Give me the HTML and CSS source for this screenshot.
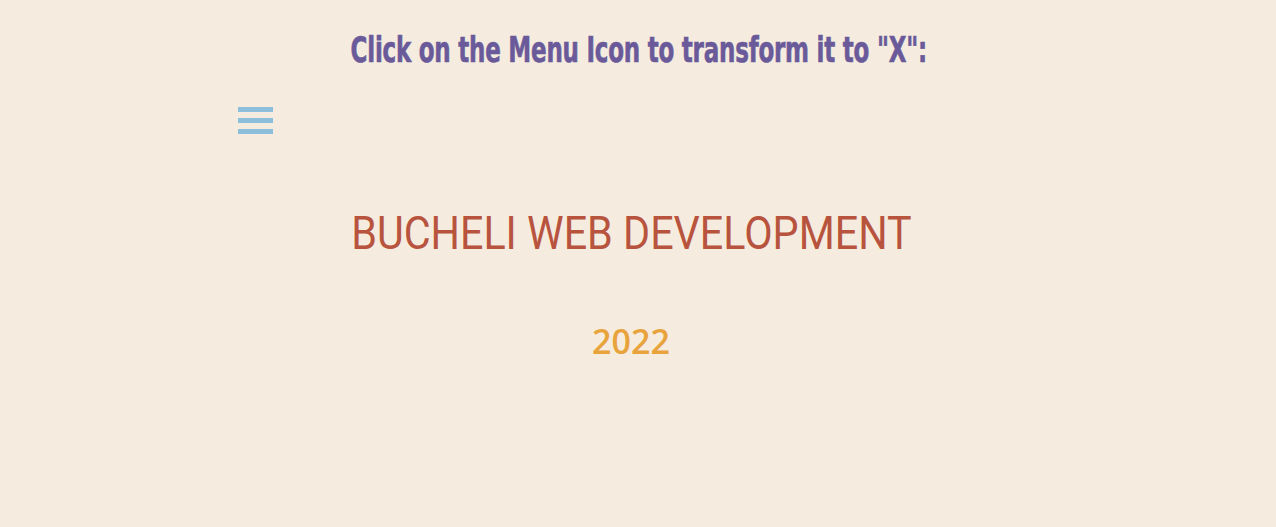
FILE: index.html
```html
<!DOCTYPE html>
<html>
<head>
<meta charset="utf-8">
<link rel="stylesheet" href="styles.css">
</head>
<body>
<div class="intro-row">
  <h2 class="intro">Click on the Menu Icon to transform it to "X":</h2>
</div>
<div class="menu-row">
  <div class="menu-icon">
    <div class="bar"></div>
    <div class="bar"></div>
    <div class="bar"></div>
  </div>
</div>
<div class="title-row">
  <h1 class="title">BUCHELI WEB DEVELOPMENT</h1>
</div>
<p class="year">2022</p>
</body>
</html>
```
FILE: styles.css
```css
html, body {
  margin: 0;
  padding: 0;
  background: #f5ecdf;
}
body {
  width: 1276px;
  height: 527px;
  overflow: hidden;
}
.intro-row {
  padding-top: 30px;
  display: flex;
  justify-content: center;
  padding-left: 1px;
}
.intro {
  margin: 0;
  font-family: "DejaVu Sans Condensed", "Liberation Sans", sans-serif;
  font-weight: 700;
  font-size: 35px;
  line-height: 40px;
  color: #6a5a9a;
  letter-spacing: -0.3px;
  white-space: nowrap;
  transform: scaleX(0.73);
  -webkit-text-stroke: 0.6px #6a5a9a;
}
.menu-row {
  padding: 37px 0 0 238px;
}
.menu-icon {
  display: flex;
  flex-direction: column;
  gap: 6px;
  width: 35px;
}
.bar {
  height: 5px;
  background: #8bbfdb;
}
.title-row {
  display: flex;
  justify-content: center;
  padding-right: 14px;
  margin-top: 72px;
}
.title {
  margin: 0;
  font-family: Roboto, sans-serif;
  font-weight: 400;
  font-size: 46px;
  line-height: 54px;
  color: #b8543e;
  white-space: nowrap;
  transform: scaleX(0.897);
}
.year {
  margin: 61px 0 0 0;
  text-align: center;
  font-family: "Open Sans", sans-serif;
  font-weight: 600;
  font-size: 34px;
  line-height: 40px;
  color: #e8a33d;
  padding-right: 14px;
}
```
